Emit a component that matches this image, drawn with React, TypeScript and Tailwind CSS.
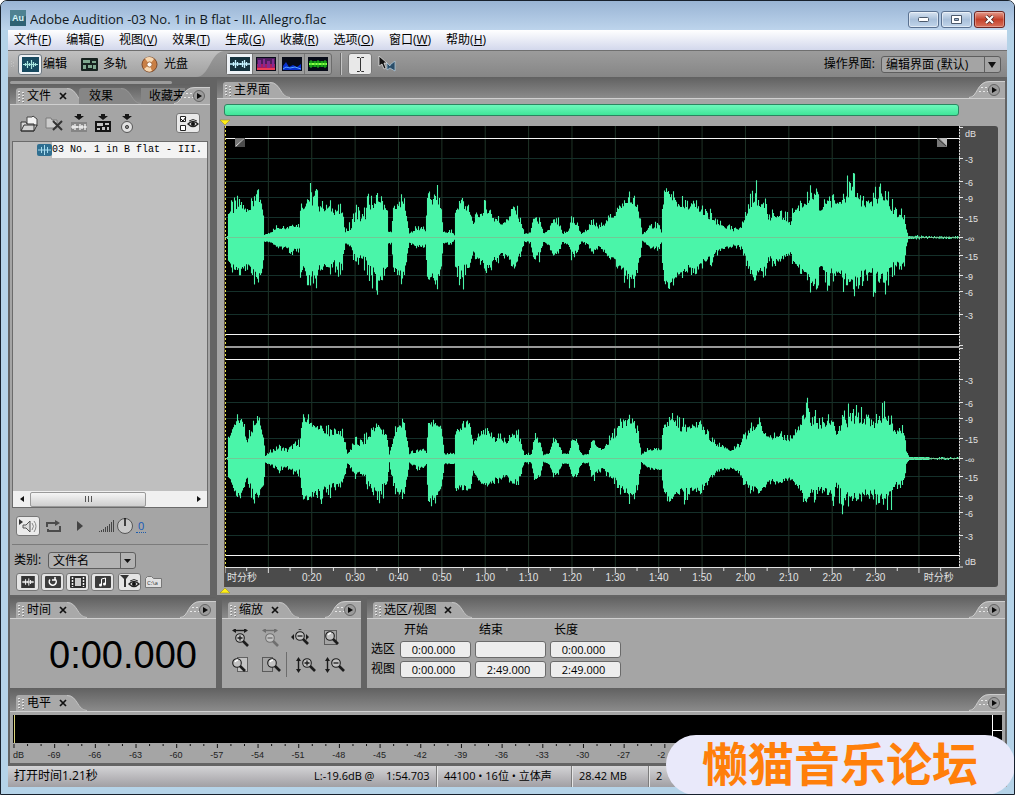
import React from "react";

type Point = [number, number, number, number, number];

// x, body above, body below, peak above, peak below
const LEFT_CHANNEL: Point[] = [
  [0, 1, 1, 1, 1], [2, 1, 1, 1, 1], [3, 24, 24, 36, 32], [8, 27, 30, 40, 37], [14, 31, 32, 51, 43], [22, 27, 28, 34, 38], [27, 33, 33, 42, 47],
  [31, 44, 40, 54, 52], [36, 34, 36, 42, 42], [38, 22, 24, 22, 24], [39, 2, 3, 2, 4], [46, 5, 5, 8, 6], [52, 9, 9, 15, 13],
  [60, 9, 10, 14, 15], [68, 11, 12, 17, 18], [74, 11, 12, 14, 14], [75, 26, 30, 40, 50], [78, 31, 32, 49, 57], [84, 35, 38, 55, 48],
  [91, 36, 38, 58, 54], [94, 30, 32, 40, 40], [102, 28, 28, 38, 35], [110, 25, 26, 33, 36], [116, 25, 26, 32, 39], [120, 5, 5, 12, 12],
  [126, 8, 9, 18, 15], [130, 20, 22, 43, 35], [138, 17, 18, 27, 30], [142, 22, 24, 49, 42], [148, 33, 34, 43, 61],
  [156, 35, 38, 43, 47], [162, 26, 28, 30, 35], [163, 5, 5, 6, 7], [166, 5, 5, 6, 7], [168, 26, 28, 33, 38], [174, 35, 36, 40, 45],
  [179, 33, 34, 44, 46], [182, 14, 15, 18, 18], [184, 4, 5, 5, 6], [192, 7, 8, 13, 11], [198, 9, 8, 16, 12], [200, 5, 5, 6, 7],
  [202, 39, 40, 49, 46], [208, 36, 40, 48, 45], [213, 38, 42, 52, 58], [216, 26, 28, 36, 36], [218, 5, 5, 6, 6], [226, 4, 5, 9, 8],
  [229, 2, 2, 2, 2], [230, 24, 27, 31, 35], [236, 34, 32, 51, 57], [242, 28, 28, 37, 41], [248, 14, 14, 17, 20],
  [254, 21, 22, 33, 28], [260, 25, 28, 39, 40], [264, 24, 28, 43, 43], [268, 18, 22, 27, 28], [276, 13, 16, 22, 24],
  [281, 15, 16, 20, 22], [287, 27, 27, 36, 35], [292, 21, 22, 32, 28], [296, 13, 13, 16, 17], [299, 3, 3, 4, 4], [305, 4, 4, 5, 6],
  [308, 18, 18, 25, 25], [314, 15, 16, 20, 24], [318, 4, 4, 5, 6], [324, 6, 7, 10, 9], [328, 17, 17, 21, 27], [333, 13, 14, 20, 20],
  [337, 3, 4, 5, 5], [342, 5, 6, 8, 7], [346, 14, 14, 30, 25], [352, 11, 12, 16, 18], [356, 3, 3, 4, 4], [362, 7, 6, 10, 8],
  [367, 12, 13, 20, 20], [374, 9, 8, 14, 12], [381, 14, 15, 20, 19], [388, 22, 22, 30, 30], [396, 29, 29, 42, 40],
  [402, 34, 34, 50, 54], [408, 34, 36, 46, 54], [413, 24, 24, 30, 32], [415, 18, 18, 20, 22], [417, 3, 3, 4, 4], [424, 8, 8, 12, 11],
  [432, 10, 10, 26, 18], [436, 5, 5, 7, 7], [438, 34, 36, 50, 42], [444, 41, 44, 51, 56], [448, 38, 42, 56, 61],
  [455, 31, 36, 43, 46], [462, 29, 29, 38, 38], [470, 27, 28, 40, 38], [479, 24, 24, 34, 30], [486, 17, 18, 28, 28],
  [492, 13, 12, 17, 17], [500, 9, 9, 15, 12], [508, 6, 7, 10, 9], [516, 10, 9, 14, 14], [520, 17, 16, 34, 32],
  [525, 34, 35, 49, 51], [531, 34, 36, 60, 46], [540, 34, 34, 50, 50], [543, 18, 20, 25, 25], [552, 20, 22, 28, 34],
  [560, 18, 18, 30, 27], [565, 14, 16, 20, 20], [568, 25, 24, 34, 30], [577, 33, 34, 44, 40], [584, 37, 40, 50, 54],
  [592, 36, 40, 50, 57], [595, 27, 28, 33, 38], [603, 35, 35, 53, 58], [610, 33, 34, 45, 45], [617, 38, 38, 60, 57],
  [626, 42, 42, 66, 56], [634, 37, 38, 52, 58], [640, 33, 34, 44, 45], [648, 37, 36, 48, 60], [656, 34, 36, 58, 46],
  [661, 37, 36, 58, 58], [666, 27, 28, 40, 46], [672, 22, 26, 32, 35], [679, 20, 28, 26, 36], [681, 7, 8, 9, 9], [683, 1, 1, 1, 1],
  [694, 0, 0, 2, 2], [700, 0, 0, 1, 1], [734, 0, 0, 1, 1],
];

const RIGHT_CHANNEL: Point[] = [
  [0, 1, 1, 1, 1], [2, 1, 1, 1, 1], [3, 20, 18, 26, 24], [9, 36, 34, 41, 40], [16, 34, 34, 52, 46], [22, 17, 20, 24, 28], [28, 30, 34, 40, 50],
  [34, 37, 34, 48, 40], [38, 22, 28, 28, 37], [40, 2, 3, 2, 4], [46, 6, 6, 10, 9], [54, 9, 9, 15, 14], [62, 7, 8, 12, 12],
  [68, 11, 12, 17, 16], [74, 12, 12, 20, 18], [77, 38, 38, 46, 42], [84, 36, 40, 49, 46], [90, 31, 32, 37, 50],
  [96, 30, 32, 34, 55], [102, 24, 28, 33, 42], [110, 25, 26, 32, 34], [115, 24, 25, 36, 32], [119, 17, 18, 24, 22], [122, 4, 4, 6, 6],
  [130, 14, 14, 22, 20], [138, 14, 15, 24, 22], [143, 18, 22, 32, 40], [149, 30, 33, 45, 42], [156, 28, 28, 32, 46],
  [161, 24, 26, 30, 34], [164, 3, 3, 4, 4], [167, 15, 18, 20, 28], [172, 32, 34, 39, 40], [180, 30, 30, 37, 38], [184, 4, 4, 5, 5],
  [192, 6, 8, 13, 12], [198, 9, 9, 14, 12], [201, 5, 5, 6, 6], [203, 36, 42, 48, 61], [210, 34, 38, 41, 50], [216, 30, 28, 38, 36],
  [219, 4, 5, 5, 5], [229, 4, 5, 7, 6], [230, 23, 25, 27, 35], [238, 34, 30, 41, 35], [244, 29, 29, 40, 38], [248, 15, 13, 20, 16],
  [255, 22, 23, 29, 26], [262, 25, 26, 33, 31], [270, 18, 21, 26, 28], [274, 20, 20, 34, 28], [280, 14, 16, 20, 20],
  [287, 23, 24, 29, 32], [293, 22, 22, 29, 28], [299, 3, 3, 4, 4], [306, 4, 4, 6, 6], [309, 17, 19, 27, 24], [315, 15, 16, 20, 20],
  [318, 3, 3, 5, 5], [324, 4, 5, 6, 6], [328, 19, 17, 26, 23], [334, 13, 12, 16, 16], [337, 4, 4, 5, 5], [343, 4, 5, 6, 6],
  [347, 19, 18, 27, 24], [353, 11, 12, 14, 14], [357, 3, 4, 4, 5], [363, 4, 4, 5, 5], [367, 16, 16, 21, 24], [376, 7, 8, 10, 12],
  [382, 14, 14, 20, 19], [388, 21, 20, 30, 28], [396, 30, 28, 44, 36], [402, 38, 34, 47, 43], [408, 32, 34, 43, 47],
  [413, 24, 24, 30, 28], [416, 3, 3, 4, 4], [424, 8, 9, 12, 12], [436, 7, 10, 10, 12], [438, 33, 32, 43, 40], [444, 36, 42, 48, 52],
  [447, 41, 40, 57, 55], [454, 27, 30, 43, 38], [460, 29, 32, 44, 50], [468, 33, 32, 42, 38], [477, 31, 30, 37, 35],
  [482, 20, 22, 30, 26], [490, 14, 14, 17, 16], [497, 12, 10, 16, 14], [504, 7, 9, 10, 11], [513, 10, 11, 16, 15],
  [519, 18, 22, 26, 28], [526, 30, 30, 40, 42], [533, 33, 30, 45, 40], [539, 26, 30, 34, 44], [545, 21, 22, 30, 28],
  [553, 18, 22, 25, 28], [560, 20, 22, 30, 28], [567, 19, 21, 30, 25], [575, 34, 32, 42, 39], [582, 37, 36, 65, 51],
  [587, 36, 34, 59, 47], [596, 33, 30, 42, 36], [602, 35, 32, 46, 40], [607, 36, 34, 42, 54], [612, 23, 24, 44, 38],
  [617, 33, 36, 46, 54], [624, 37, 38, 59, 48], [634, 40, 40, 54, 48], [643, 37, 34, 49, 42], [648, 32, 34, 44, 46],
  [653, 37, 38, 56, 56], [659, 40, 38, 64, 57], [666, 30, 32, 44, 53], [672, 26, 24, 37, 36], [679, 26, 22, 34, 27], [681, 7, 5, 9, 5],
  [684, 1, 1, 1, 1], [703, 1, 1, 1, 1], [705, 0, 0, 1, 1], [734, 0, 0, 1, 1],
];

function noise(n: number): number {
  const v = Math.sin(n * 12.9898) * 43758.5453;
  return v - Math.floor(v);
}

function wavePath(points: Point[], center: number, seed: number): string {
  let d = "";
  let seg = 0;
  for (let x = 2; x < 734; x++) {
    while (seg < points.length - 2 && points[seg + 1][0] <= x) seg++;
    const a = points[seg];
    const b = points[seg + 1];
    const t = (x - a[0]) / (b[0] - a[0]);
    const mix = (k: number) => a[k] + (b[k] - a[k]) * t;
    const n1 = noise(x + seed);
    const n2 = noise(x * 1.7 + seed * 3 + 9);
    const up = mix(1) * (0.84 + 0.2 * n2) + (mix(3) - mix(1)) * 1.1 * Math.pow(n1, 2.6);
    const down = mix(2) * (0.84 + 0.2 * n1) + (mix(4) - mix(2)) * 1.1 * Math.pow(n2, 2.6);
    d += `M${x + 0.5} ${(center - up).toFixed(1)}V${(center + down + 1).toFixed(1)}`;
  }
  return d;
}

const WAVES = [wavePath(LEFT_CHANNEL, 111, 4), wavePath(RIGHT_CHANNEL, 332, 77)];
const GRID_Y = [32, 55, 71, 91, 129, 149, 165, 188, 253, 276, 292, 312, 350, 370, 386, 409];
const DB_LABELS: [number, string][] = [
  [7, "dB"], [33, "-3"], [56, "-6"], [72, "-9"], [92, "-15"], [112, "-∞"], [130, "-15"], [150, "-9"], [166, "-6"], [189, "-3"],
  [254, "-3"], [277, "-6"], [293, "-9"], [313, "-15"], [333, "-∞"], [351, "-15"], [371, "-9"], [387, "-6"], [410, "-3"], [435, "dB"],
];
const TIMES = ["0:20", "0:30", "0:40", "0:50", "1:00", "1:10", "1:20", "1:30", "1:40", "1:50", "2:00", "2:10", "2:20", "2:30"];
const STEP = 5.909;

const UI = "font-['Open_Sans','Noto_Sans_CJK_SC',sans-serif]";

function Grip({ className = "" }: { className?: string }) {
  return (
    <svg width="8" height="13" viewBox="0 0 8 13" className={className} aria-hidden="true">
      {[1, 4, 7, 10].map((y) => (
        <g key={y}>
          <path d={`M0 ${y}h2v1h-2zM4 ${y + 1}h2v1h-2z`} fill="#e6e6e6" />
          <path d={`M1 ${y + 1}h1v1h-1zM5 ${y + 2}h1v1h-1z`} fill="#7b7b7b" />
        </g>
      ))}
    </svg>
  );
}

function Tab({ label, active = true, closable = true }: { label: string; active?: boolean; closable?: boolean }) {
  return (
    <div className="flex h-4 shrink-0">
      <div className={`flex items-center rounded-tl-[3px] ${active ? "bg-[#a9a9a9]" : "bg-[#868686]"} pl-0.5`}>
        {active ? <Grip /> : null}
        <button type="button" className={`text-[12px] leading-4 text-black ${active ? "pl-px" : "px-2"}`}>{label}</button>
        {closable ? (
          <button type="button" aria-label={`关闭${label}`} className="ml-2">
            <svg width="8" height="8" viewBox="0 0 8 8"><path d="M1 1l6 6M7 1l-6 6" stroke="#111" strokeWidth="1.7" /></svg>
          </button>
        ) : null}
      </div>
      <svg width="20" height="16" viewBox="0 0 20 16" aria-hidden="true">
        <path d="M0 0C11 0 10 16 20 16H0Z" fill={active ? "#a9a9a9" : "#868686"} />
        <path d="M0 .5C11 .5 10 15.5 20 15.5" fill="none" stroke={active ? "#c4c4c4" : "#959595"} />
      </svg>
    </div>
  );
}

function PanelMenu({ label }: { label: string }) {
  return (
    <button type="button" aria-label={label} className="ml-auto shrink-0">
      <svg width="36" height="17" viewBox="0 0 36 17">
        <path d="M0 17C9 17 7 0 21 0H36V17Z" fill="#a9a9a9" />
        <path d="M0 16.5C9 16.5 7 .5 21 .5H36" fill="none" stroke="#cdcdcd" />
        {[12, 16, 20].map((x) => (
          <path key={x} d={`M${x} 6h2v1h-2zM${x - 2} 10h2v1h-2z`} fill="#e8e8e8" />
        ))}
        <circle cx="25" cy="9" r="5.5" fill="#9b9b9b" stroke="#666" />
        <path d="M23 6l5 3-5 3z" fill="#0a0a0a" />
      </svg>
    </button>
  );
}

function Strip({ children, className }: { children: React.ReactNode; className: string }) {
  return (
    <div className={`flex items-end border-b border-[#cfcfcf] bg-linear-to-b from-[#616161] to-[#8b8b8b] pl-1.5 ${className}`}>{children}</div>
  );
}

function WaveIcon({ className = "", stroke = "#a8e6df", bg = "#17495f" }: { className?: string; stroke?: string; bg?: string }) {
  return (
    <svg width="17" height="15" viewBox="0 0 17 15" className={className} aria-hidden="true">
      <rect width="17" height="15" fill={bg} />
      <path d="M1 7.5h15M3.5 6v3M5.5 4v7M7.5 6v3M9.5 3v9M11.5 5v5M13.5 6v3" stroke={stroke} strokeWidth="1.2" />
    </svg>
  );
}

function SpectrumIcon({ kind }: { kind: "wave" | "freq" | "pan" | "phase" }) {
  return (
    <svg width="20" height="14" viewBox="0 0 20 14" aria-hidden="true">
      <rect width="20" height="14" fill={kind === "wave" ? "#15323d" : "#070b18"} />
      {kind === "wave" && <path d="M0 7h20M3.5 5v4M5.5 3v8M7.5 5v4M10.5 6v2M12.5 4v6M14.5 3v8M16.5 5v4" stroke="#c4f2ff" strokeWidth="1.3" />}
      {kind === "freq" && (
        <>
          <path d="M1 1h18v12H1z" fill="#4b1c5c" />
          <path d="M1 7h18v6H1z" fill="#a81a62" />
          <path d="M2 3h3v7H2zM7 2h2v8H7zM11 4h3v7h-3zM16 2h2v8h-2z" fill="#842a90" />
          <path d="M1 11h18v2H1z" fill="#ed3d57" />
        </>
      )}
      {kind === "pan" && (
        <>
          <path d="M1 9l3-4 3 5 4-2 4 2 4-3v6H1z" fill="#0730cf" />
          <path d="M1 12l3-2 4 1 5-1 6 2" fill="none" stroke="#5aa4ff" />
        </>
      )}
      {kind === "phase" && (
        <>
          <path d="M1 4h18v6H1z" fill="#087b10" />
          <path d="M1 7h18" stroke="#8cff47" strokeWidth="2" />
          <path d="M3 3v8M7 4v6M10 3v8M14 4v6M17 3v8" stroke="#2bc425" />
        </>
      )}
    </svg>
  );
}

function MultiIcon() {
  return (
    <svg width="17" height="13" viewBox="0 0 17 13" aria-hidden="true">
      <rect width="17" height="13" rx="1" fill="#17221f" />
      <path d="M2 2h7v3H2zM11 3h4v2h-4zM2 7h3v4H2zM7 7h4v3H7zM12 7h3v4h-3z" fill="#7fa88f" />
    </svg>
  );
}

function ImportIcon({ kind }: { kind: "wave" | "multi" | "disc" }) {
  return (
    <svg width="18" height="19" viewBox="0 0 18 19" aria-hidden="true">
      <path d="M7 0h4v2h3L9 6 4 2h3z" fill="#171717" />
      {kind === "wave" && (
        <>
          <path d="M1 8h16v10H1z" fill="#858585" />
          <path d="M1 13h16M3 11v4M5 10v6M7 12v2M10 10v6M12 11v4M15 10v6" stroke="#fff" strokeWidth="1.2" />
        </>
      )}
      {kind === "multi" && (
        <>
          <path d="M1 7h16v11H1z" fill="#151515" />
          <path d="M3 9h6v3H3zM11 9h4v2h-4zM3 14h3v2H3zM8 13h3v3H8zM13 13h2v3h-2z" fill="#c4c4c4" />
        </>
      )}
      {kind === "disc" && (
        <>
          <circle cx="9" cy="13" r="5.5" fill="#e1e1e1" stroke="#555" />
          <circle cx="9" cy="13" r="1.6" fill="#888" stroke="#444" />
        </>
      )}
    </svg>
  );
}

function Eye({ x, y }: { x: number; y: number }) {
  return (
    <g transform={`translate(${x} ${y})`}>
      <path d="M0 4Q5-1 10 4Q5 9 0 4Z" fill="#ddd" stroke="#222" strokeWidth="1.4" />
      <circle cx="5" cy="4" r="2" fill="#111" />
      <path d="M1 1Q5-2 9 1" fill="none" stroke="#333" />
    </g>
  );
}

type ZoomKind = "hin" | "hout" | "full" | "sel" | "left" | "right" | "vin" | "vout";

function ZoomIcon({ kind }: { kind: ZoomKind }) {
  const gray = kind === "hout" ? "#6f6f6f" : "#1c1c1c";
  const horizontal = kind === "hin" || kind === "hout";
  const vertical = kind === "vin" || kind === "vout";
  const box = kind === "sel" || kind === "left" || kind === "right";
  const cx = kind === "left" ? 6 : vertical ? 11 : kind === "right" ? 11 : 9;
  const cy = horizontal ? 9 : 7;
  return (
    <svg width="20" height="18" viewBox="0 0 20 18" aria-hidden="true">
      {horizontal && <path d="M3 1.5h12" stroke={gray} strokeWidth="1.4" />}
      {horizontal && <path d="M5 -1L1 1.5 5 4zM13 -1L17 1.5 13 4z" fill={gray} />}
      {vertical && <path d="M2.500 3v12" stroke={gray} strokeWidth="1.4" />}
      {vertical && <path d="M0 5l2.500-4L5 5zM0 13l2.500 4L5 13z" fill={gray} />}
      {box && (
        <rect x={kind === "left" ? 6.5 : kind === "right" ? 1.5 : 3.5} y="1.5" width={kind === "sel" ? 12 : 10} height="14" fill={kind === "left" ? "#c4c4c4" : "none"} stroke="#111" strokeDasharray="1 1" />
      )}
      {kind === "full" && <path d="M0 8l3-3v6zM18 8l-3-3v6zM7 1l2-1 2 1z" fill={gray} />}
      <path d={`M${cx + 3} ${cy + 3}l5 5`} stroke={gray} strokeWidth="2.6" />
      <circle cx={cx} cy={cy} r="4.300" fill="#c2c2c2" stroke={gray} strokeWidth="1.1" />
      {!box && <path d={kind === "hin" || kind === "vin" ? `M${cx - 2.5} ${cy}h5M${cx} ${cy - 2.5}v5` : `M${cx - 2.5} ${cy}h5`} stroke={gray} strokeWidth="1.3" />}
      {box && <path d={`M${cx - 2} ${cy - 1}q1-2 3-2`} fill="none" stroke="#fff" strokeWidth="1.3" />}
    </svg>
  );
}

const ZOOMS: [ZoomKind, string][] = [
  ["hin", "水平放大"], ["hout", "水平缩小"], ["full", "全部缩小"], ["sel", "缩放至选区"],
  ["left", "放大选区左侧"], ["right", "放大选区右侧"], ["vin", "垂直放大"], ["vout", "垂直缩小"],
];

const MENUS = [["文件", "F"], ["编辑", "E"], ["视图", "V"], ["效果", "T"], ["生成", "G"], ["收藏", "R"], ["选项", "O"], ["窗口", "W"], ["帮助", "H"]];

function TitleBar() {
  return (
    <header className="flex h-[29px] shrink-0 items-center bg-linear-to-b from-[#99b4d4] to-[#bdd4ec] pl-[9px] pr-[9px]">
      <svg width="16" height="16" viewBox="0 0 16 16" className="mt-1" aria-hidden="true">
        <rect width="16" height="16" fill="#2f6273" />
        <path d="M0 0h16v6L0 11z" fill="#4e8291" />
        <text x="2" y="11" fontSize="9" fontWeight="700" fill="#d9f5f8" fontFamily="Liberation Sans, sans-serif">Au</text>
      </svg>
      <h1 className="ml-1 mt-1.5 grow truncate text-[13px] leading-4 text-[#101820]">Adobe Audition -03 No. 1 in B flat - III. Allegro.flac</h1>
      <div className="mt-2 flex gap-0.5">
        <button type="button" aria-label="最小化" className="grid h-[17px] w-[31px] place-items-center rounded-[3px] border border-[#5a7190] bg-linear-to-b from-[#d8e4f1] via-[#a9c0da] to-[#c1d5ea] inset-ring inset-ring-white/50">
          <svg width="11" height="5" viewBox="0 0 11 5"><rect x=".5" y=".5" width="10" height="4" rx="1" fill="#fff" stroke="#4c5a6c" /></svg>
        </button>
        <button type="button" aria-label="最大化" className="grid h-[17px] w-[31px] place-items-center rounded-[3px] border border-[#5a7190] bg-linear-to-b from-[#d8e4f1] via-[#a9c0da] to-[#c1d5ea] inset-ring inset-ring-white/50">
          <svg width="11" height="9" viewBox="0 0 11 9"><path d="M.5.500h10v8H.5z" fill="#fff" stroke="#4c5a6c" /><path d="M3.500 3.500h4v2h-4z" fill="#9bb3cf" stroke="#4c5a6c" /></svg>
        </button>
        <button type="button" aria-label="关闭" className="grid h-[17px] w-[31px] place-items-center rounded-[3px] border border-[#6d2421] bg-linear-to-b from-[#e39a8c] via-[#c4402a] to-[#d8705a] inset-ring inset-ring-white/30">
          <svg width="11" height="9" viewBox="0 0 11 9"><path d="M2 1l7 7M9 1L2 8" stroke="#47221f" strokeWidth="3.600" /><path d="M2 1l7 7M9 1L2 8" stroke="#fff" strokeWidth="2.200" /></svg>
        </button>
      </div>
    </header>
  );
}

function Toolbar() {
  return (
    <div className="flex h-[27px] shrink-0 items-stretch border-t border-[#6f6f6f] bg-linear-to-b from-[#9c9c9c] to-[#868686] text-[12px]">
      <div className="flex items-center bg-linear-to-b from-[#c0c0c0] to-[#a0a0a0] pl-[3px]">
        <Grip className="w-1" />
        <button type="button" className="ml-[3px] flex items-center">
          <span className="grid h-[21px] w-6 place-items-center rounded-[3px] border border-[#6d7880] bg-[#eef2f6]"><WaveIcon /></span>
          <span className="pl-px">编辑</span>
        </button>
        <button type="button" className="ml-[14px] flex items-center gap-[5px]"><MultiIcon />多轨</button>
        <button type="button" className="ml-[14px] flex items-center gap-[6px]">
          <svg width="17" height="17" viewBox="0 0 17 17" aria-hidden="true">
            <circle cx="8.500" cy="8.500" r="7.500" fill="#c97f45" stroke="#7c4a2b" />
            <path d="M8.500 8.500L4 2.500A7 7 0 0 1 13 3zM8.500 8.500L3 13a7 7 0 0 0 8 2z" fill="#f7d7b0" />
            <circle cx="8.500" cy="8.500" r="2.600" fill="#fff" stroke="#a76c3e" />
          </svg>
          光盘
        </button>
        <span className="w-2" />
      </div>
      <svg width="30" height="26" viewBox="0 0 30 26" aria-hidden="true">
        <defs><linearGradient id="toolbarCurve" x2="0" y2="1"><stop stopColor="#c0c0c0" /><stop offset="1" stopColor="#a0a0a0" /></linearGradient></defs>
        <path d="M0 0H28C14 1 14 26 0 26Z" fill="url(#toolbarCurve)" />
      </svg>
      <div className="my-0.5 flex rounded-[3px] border border-[#6c6c6c] bg-[#9d9d9d]">
        {(["wave", "freq", "pan", "phase"] as const).map((kind, i) => (
          <button key={kind} type="button" aria-label={["波形视图", "频谱视图", "声像视图", "相位视图"][i]} className={`grid w-[26px] place-items-center border-r border-[#777] last:border-r-0 ${i === 0 ? "bg-[#eef2f6]" : ""}`}>
            <SpectrumIcon kind={kind} />
          </button>
        ))}
      </div>
      <span className="my-0.5 ml-2 w-0.5 border-l border-[#6a6a6a] bg-[#c4c4c4]" />
      <button type="button" aria-label="时间选择工具" className="my-0.5 ml-1.5 grid w-6 place-items-center rounded-[3px] border border-[#777] bg-[#e8e8e8]">
        <svg width="9" height="15" viewBox="0 0 9 15"><path d="M1 .5h2.500l1 1 1-1H8M4.500 1v13M1 14.500h2.500l1-1 1 1H8" fill="none" stroke="#333" /></svg>
      </button>
      <button type="button" aria-label="移动工具" className="ml-[6px]">
        <svg width="18" height="18" viewBox="0 0 18 18">
          <path d="M1 1v10l3-2 2 5 2-1-2-5h3z" fill="#111" stroke="#eee" strokeWidth=".7" />
          <path d="M9 8l3 3v-1l5-4v10l-5-3-3 2z" fill="#2a4d68" stroke="#b5d0e2" strokeWidth=".7" />
        </svg>
      </button>
      <label htmlFor="workspace" className="ml-auto self-center pr-1.5">操作界面:</label>
      <div className="relative mr-1.5 grid self-center">
        <select id="workspace" className="h-[17px] w-[120px] appearance-none rounded-[3px] border border-[#5e5e5e] bg-[#a4a4a4] pl-1 text-[12px] leading-[15px] text-black">
          <option>编辑界面 (默认)</option>
        </select>
        <svg width="16" height="15" viewBox="0 0 16 15" className="pointer-events-none absolute right-px top-px" aria-hidden="true"><path d="M.5 0v15" stroke="#5e5e5e" /><path d="M4 5h8l-4 6z" fill="#111" /></svg>
      </div>
    </div>
  );
}

function FilesPanel() {
  const square = "grid h-[18px] w-[23px] place-items-center rounded-[3px] border border-[#777] bg-[#e4e4e4]";
  return (
    <section className="flex w-[200px] shrink-0 flex-col">
      <div className="mt-1 h-[3px] w-[162px] rounded-full bg-[#9c9c9c]" />
      <Strip className="h-[21px]">
        <Tab label="文件" />
        <div className="-ml-2"><Tab label="效果" active={false} closable={false} /></div>
        <button type="button" className="-mr-4 h-4 shrink-0 whitespace-nowrap bg-[#868686] pl-2 text-[12px] leading-4 text-black">收藏夹</button>
        <PanelMenu label="文件面板菜单" />
      </Strip>
      <div className="flex grow flex-col bg-[#a5a5a5] px-0.5">
        <div className="flex h-9 items-center gap-1.5 pl-2">
          <button type="button" aria-label="打开文件">
            <svg width="19" height="17" viewBox="0 0 19 17"><path d="M7 6V2h5l1-1 4 3v7H7z" fill="#f2f2f2" stroke="#444" /><path d="M1 16V7h5l1 2h7v7zM1 16l3-6h13l-3 6z" fill="#d4d4d4" stroke="#333" /></svg>
          </button>
          <button type="button" aria-label="关闭文件">
            <svg width="19" height="17" viewBox="0 0 19 17"><path d="M1 13V3h5l1 2h5v8z" fill="#ccc" stroke="#7b7b7b" /><path d="M8 6l9 9M17 6l-9 9" stroke="#333" strokeWidth="2" /></svg>
          </button>
          <button type="button" aria-label="插入波形"><ImportIcon kind="wave" /></button>
          <button type="button" aria-label="插入多轨"><ImportIcon kind="multi" /></button>
          <button type="button" aria-label="插入光盘"><ImportIcon kind="disc" /></button>
          <button type="button" aria-label="高级选项" className="ml-auto mr-2 grid h-5 w-6 place-items-center rounded-[3px] border border-[#777] bg-[#e9e9e9]">
            <svg width="21" height="17" viewBox="0 0 21 17"><path d="M2.500 1.500h5v5h-5zM2.500 10.500h5v5h-5z" fill="#fff" stroke="#222" /><path d="M3 4l2 2 3-4" fill="none" stroke="#111" /><Eye x={10} y={5} /></svg>
          </button>
        </div>
        <ul className="min-h-[350px] grow border border-b-0 border-[#6b6b6b] bg-[#bfbfbf]">
          <li className="flex h-4 items-center pl-6">
            <svg width="15" height="12" viewBox="0 0 15 12" className="shrink-0" aria-hidden="true"><rect width="15" height="12" rx="2" fill="#2f6f91" /><path d="M1 6h13M4.500 3v6M7.500 1v10M10.500 3v6" stroke="#a7dcef" /></svg>
            <span className="grow overflow-hidden whitespace-pre bg-[#f3f3f3] font-['Liberation_Mono',monospace] text-[10px] leading-4 text-black">03 No. 1 in B flat - III.</span>
          </li>
        </ul>
        <div className="flex h-[17px] shrink-0 items-center border border-t-0 border-[#6b6b6b] bg-[#f0f0f0]">
          <button type="button" aria-label="向左滚动" className="grid w-[17px] place-items-center"><svg width="4" height="6" viewBox="0 0 4 6"><path d="M4 0v6L0 3z" fill="#111" /></svg></button>
          <span className="grid h-[15px] w-[116px] place-items-center rounded-[2px] border border-[#999] bg-linear-to-b from-[#f5f5f5] to-[#cfcfcf]"><svg width="8" height="6" viewBox="0 0 8 6"><path d="M1.500 0v6M4.500 0v6M7.500 0v6" stroke="#555" /></svg></span>
          <button type="button" aria-label="向右滚动" className="ml-auto grid w-[17px] place-items-center"><svg width="4" height="6" viewBox="0 0 4 6"><path d="M0 0v6l4-3z" fill="#111" /></svg></button>
        </div>
        <div className="flex h-[37px] shrink-0 items-center border-b border-[#7b7b7b] pl-1">
          <button type="button" aria-label="自动播放" className="grid h-5 w-6 place-items-center rounded-[3px] border border-[#777] bg-[#ebebeb]">
            <svg width="20" height="15" viewBox="0 0 20 15"><path d="M1 0v6l4-3z" fill="#333" /><path d="M5 6h3l4-4v11l-4-4H5z" fill="#ddd" stroke="#555" /><path d="M14 4q3 3 0 7M16 2q4 5 0 11" fill="none" stroke="#888" /></svg>
          </button>
          <button type="button" aria-label="循环" className="ml-1.5"><svg width="15" height="13" viewBox="0 0 15 13"><path d="M1 7V3h9M14 6v5H2V9" fill="none" stroke="#4b4b4b" strokeWidth="2" /><path d="M9 0l5 3-5 3z" fill="#4b4b4b" /></svg></button>
          <button type="button" aria-label="播放" className="ml-4"><svg width="6" height="10" viewBox="0 0 6 10"><path d="M0 0v10l6-5z" fill="#444" /></svg></button>
          <svg width="15" height="14" viewBox="0 0 15 14" className="ml-4" aria-hidden="true"><path d="M.5 12v1M2.500 11v2M4.500 10v3M6.500 8v5M8.500 7v6M10.500 5v8M12.500 3v10M14.500 1v12" stroke="#444" /></svg>
          <button type="button" aria-label="音量" className="ml-0.5"><svg width="18" height="18" viewBox="0 0 18 18"><circle cx="9" cy="9" r="7.500" fill="#c9c9c9" stroke="#555" /><path d="M9 1v8" stroke="#111" strokeWidth="1.500" /></svg></button>
          <a href="#volume" className="ml-0.5 border-b border-dotted border-[#1c5cad] px-0.5 text-[11px] leading-3 text-[#1659b8]">0</a>
        </div>
        <div className="flex h-6 shrink-0 items-end text-[12px]">
          <label htmlFor="category" className="w-9 pl-0.5 leading-[18px]">类别:</label>
          <div className="relative grid">
            <select id="category" className="h-[17px] w-[88px] appearance-none rounded-[3px] border border-[#5e5e5e] bg-[#b2b2b2] pl-1 text-[12px] leading-[15px] text-black"><option>文件名</option></select>
            <svg width="15" height="15" viewBox="0 0 15 15" className="pointer-events-none absolute right-px top-px" aria-hidden="true"><path d="M.5 0v15" stroke="#5e5e5e" /><path d="M4 6h7l-3.500 4z" fill="#111" /></svg>
          </div>
        </div>
        <div className="flex h-[26px] shrink-0 items-center gap-0.5 pl-1">
          <button type="button" aria-label="显示音频" className={square}><WaveIcon className="h-3 w-4" stroke="#fff" bg="#333" /></button>
          <button type="button" aria-label="显示循环" className={square}><svg width="16" height="12" viewBox="0 0 16 12"><rect width="16" height="12" rx="1" fill="#3c3c3c" /><path d="M5 3.500A3.500 3.500 0 1 0 10 3M10 1v3H7" fill="none" stroke="#fff" strokeWidth="1.500" /></svg></button>
          <button type="button" aria-label="显示视频" className={square}><svg width="16" height="12" viewBox="0 0 16 12"><rect width="16" height="12" rx="1" fill="#2e2e2e" /><path d="M5 2h6v8H5z" fill="#ccc" /><path d="M2.500 1v10M13.500 1v10" stroke="#eee" strokeWidth="1.500" strokeDasharray="2 1" /></svg></button>
          <button type="button" aria-label="显示MIDI" className={square}><svg width="16" height="12" viewBox="0 0 16 12"><rect width="16" height="12" rx="1" fill="#3c3c3c" /><path d="M6.500 9V3l4-1v6" fill="none" stroke="#fff" /><circle cx="5.500" cy="9" r="1.500" fill="#fff" /><circle cx="9.500" cy="8" r="1.500" fill="#fff" /></svg></button>
          <button type="button" aria-label="筛选" className={`${square} ml-0.5`}><svg width="20" height="14" viewBox="0 0 20 14"><path d="M0 0h9L6 4v8H4V4z" fill="#333" /><Eye x={9} y={5} /></svg></button>
          <button type="button" aria-label="完整路径" className="ml-0.5"><svg width="17" height="12" viewBox="0 0 17 12"><path d="M.5 11.500v-9l2-2h4l2 2h8v9z" fill="#e1e1e1" stroke="#777" /><text x="2" y="9" fontSize="6" fill="#333">C:\a</text></svg></button>
        </div>
      </div>
    </section>
  );
}

function Waveform() {
  return (
    <svg className="h-[442px] min-w-0 grow" role="img" aria-label="立体声波形">
      {Array.from({ length: 16 }, (_, i) => (
        <line key={i} x1={`${(i + 1) * STEP}%`} x2={`${(i + 1) * STEP}%`} y1="0" y2="442" stroke="#1f3327" />
      ))}
      {GRID_Y.map((y) => <line key={y} x1="0" x2="100%" y1={y + 0.5} y2={y + 0.5} stroke="#15302a" />)}
      <svg width="100%" height="442" viewBox="0 0 734 442" preserveAspectRatio="none">
        {WAVES.map((d, i) => <path key={i} d={d} stroke="#4af5a9" strokeWidth="1.100" />)}
      </svg>
      {[111, 332].map((y) => <line key={y} x1="0" x2="100%" y1={y + 0.5} y2={y + 0.5} stroke="#71c995" />)}
      {[12, 208, 233, 429].map((y) => <rect key={y} width="100%" height="1" y={y} fill="#f4f4f4" />)}
      <rect width="100%" height="2" y="220" fill="#999" />
      <path d="M.5 0V442" stroke="#e3e04b" strokeDasharray="2 2" />
      <rect width="100%" height="1" y="441" fill="#e0e0e0" />
      <g><rect x="10" y="12" width="10" height="9" fill="#777" /><path d="M11 20l8-7" stroke="#ddd" /><path d="M20 12v9H11z" fill="#4c4c4c" /></g>
      <svg x="97%" y="12" width="10" height="9" overflow="visible"><rect width="10" height="9" fill="#777" /><path d="M1 1l8 7" stroke="#333" /><path d="M2 0h8v8z" fill="#bbb" /></svg>
    </svg>
  );
}

function MainPanel() {
  return (
    <section className="flex min-w-0 grow flex-col">
      <Strip className="h-[22px]">
        <Tab label="主界面" closable={false} />
        <PanelMenu label="主界面菜单" />
      </Strip>
      <div className="grow bg-[#a5a5a5] px-[7px] pb-2 pt-[5px]">
        <div className="mr-[39px] h-3 rounded-[3px] border border-[#2c8560] bg-linear-to-b from-[#6cf9bc] to-[#3fe699]" />
        <svg width="10" height="10" viewBox="0 0 10 10" className="-ml-1" aria-hidden="true"><path d="M0 4h10L5 9z" fill="#ffee16" stroke="#9a9021" strokeWidth=".6" /></svg>
        <div className="rounded-r-[3px] border-l border-[#5c4f45] bg-[#4b4b4b]">
          <div className="flex">
            <div className="flex min-w-0 grow bg-black"><Waveform /></div>
            <svg width="39" height="442" viewBox="0 0 39 442" className="shrink-0" fontFamily="Liberation Sans, sans-serif" fontSize="9" fill="#e2e2e2">
              <path d="M.5 0V442" stroke="#d9d9d9" strokeDasharray="2 1" />
              {DB_LABELS.map(([y, label], i) => (
                <g key={i}><path d={`M0 ${label === "dB" ? (y < 20 ? 1.5 : 441) : y - 0.5}h4`} stroke="#e2e2e2" /><text x="6" y={y + 4}>{label}</text></g>
              ))}
              <path d="M0 219.500h4M0 222.500h4" stroke="#e2e2e2" />
            </svg>
          </div>
          <div className="pr-[39px]">
            <svg className="block h-[19px] w-full" fontFamily="Liberation Sans, Noto Sans CJK SC, sans-serif" fontSize="10" fill="#e2e2e2">
              {Array.from({ length: 34 }, (_, i) => (
                <line key={i} x1={`${(i * STEP) / 2}%`} x2={`${(i * STEP) / 2}%`} y1="0" y2={i % 2 ? 3 : 5} stroke="#ddd" />
              ))}
              <text x="2" y="13">时分秒</text>
              {TIMES.map((t, i) => <text key={t} x={`${(i + 2) * STEP}%`} y="13" textAnchor="middle">{t}</text>)}
              <text x="95.200%" y="13">时分秒</text>
            </svg>
          </div>
        </div>
        <svg width="10" height="7" viewBox="0 0 10 7" className="-mb-2 -ml-1" aria-hidden="true"><path d="M0 6h10L5 1z" fill="#ffee16" stroke="#9a9021" strokeWidth=".6" /></svg>
      </div>
    </section>
  );
}

function TimeField({ label, value }: { label: string; value: string }) {
  return (
    <td className="p-0 pr-1">
      <input aria-label={label} defaultValue={value} className="block h-[17px] w-[71px] rounded-[3px] border border-[#6a6a6a] bg-[#ededed] pr-1 text-center text-[11px] leading-[15px] text-black" />
    </td>
  );
}

function BottomPanels() {
  return (
    <div className="mt-0.5 flex shrink-0 gap-1.5">
      <section className="flex w-[206px] shrink-0 flex-col">
        <Strip className="h-[22px]"><Tab label="时间" /><PanelMenu label="时间面板菜单" /></Strip>
        <div className="grid h-[69px] place-items-center bg-[#a5a5a5] pl-5 pt-0.5 font-['Liberation_Sans',sans-serif] text-[38px] leading-none text-black">0:00.000</div>
      </section>
      <section className="flex w-[139px] shrink-0 flex-col">
        <Strip className="h-[22px]"><Tab label="缩放" /><PanelMenu label="缩放面板菜单" /></Strip>
        <div className="grid h-[69px] grid-cols-[repeat(4,30px)] content-start gap-y-0.5 bg-[#a5a5a5] px-1 pt-1.5">
          {ZOOMS.map(([kind, label]) => (
            <button key={kind} type="button" aria-label={label} className={`grid h-[25px] place-items-center ${kind === "vin" ? "border-l border-[#6d6d6d] pl-2" : kind === "vout" ? "pl-2" : ""}`}><ZoomIcon kind={kind} /></button>
          ))}
        </div>
      </section>
      <section className="flex min-w-0 grow flex-col">
        <Strip className="h-[22px]"><Tab label="选区/视图" /><PanelMenu label="选区面板菜单" /></Strip>
        <div className="h-[69px] bg-[#a5a5a5] pl-1 pt-0.5">
          <table className="border-separate border-spacing-0 text-[12px]">
            <thead>
              <tr className="h-[18px] text-left leading-[18px]"><td className="w-[29px] p-0" /><th className="p-0 pl-1 font-normal">开始</th><th className="p-0 pl-1 font-normal">结束</th><th className="p-0 pl-1 font-normal">长度</th></tr>
            </thead>
            <tbody>
              <tr className="h-5"><th className="p-0 text-left font-normal">选区</th><TimeField label="选区开始" value="0:00.000" /><TimeField label="选区结束" value="" /><TimeField label="选区长度" value="0:00.000" /></tr>
              <tr className="h-5"><th className="p-0 text-left font-normal">视图</th><TimeField label="视图开始" value="0:00.000" /><TimeField label="视图结束" value="2:49.000" /><TimeField label="视图长度" value="2:49.000" /></tr>
            </tbody>
          </table>
        </div>
      </section>
    </div>
  );
}

function Levels() {
  const labels = Array.from({ length: 15 }, (_, i) => String(-69 + i * 3));
  return (
    <section className="shrink-0">
      <Strip className="h-6"><Tab label="电平" /><PanelMenu label="电平面板菜单" /></Strip>
      <div className="bg-[#a5a5a5] px-[3px] pt-[3px]">
        <div className="flex h-7 justify-between bg-black">
          <span className="ml-px w-px bg-[#d9d27a]" />
          <span className="flex w-2.5 flex-col border-l border-white"><span className="h-4 border-b border-white" /></span>
        </div>
        <svg className="block h-5 w-full" fontFamily="Liberation Sans, Noto Sans CJK SC, sans-serif" fontSize="9" fill="#222">
          {Array.from({ length: 72 }, (_, i) => (
            <line key={i} x1={`${0.1 + i * 1.371}%`} x2={`${0.1 + i * 1.371}%`} y1="1" y2={i % 3 ? 3 : 5} stroke="#111" />
          ))}
          <text x="0" y="15">dB</text>
          {labels.map((t, i) => <text key={t} x={`${4.15 + i * 4.113}%`} y="15" textAnchor="middle">{t}</text>)}
          <text x={`${4.15 + 15 * 4.113}%`} y="15" dx="-7">-2</text>
        </svg>
      </div>
    </section>
  );
}

function StatusBar() {
  const cell = "border-l border-[#e6e6e6] pl-1.5 shadow-[-1px_0_0_#7c7c7c]";
  return (
    <footer className="mt-[3px] flex h-[21px] shrink-0 items-stretch overflow-hidden whitespace-nowrap bg-linear-to-b from-[#d4d4d6] to-[#a19fa4] pl-1.5 text-[11px] leading-5 text-black">
      <span className="w-[300px] text-[12px]">打开时间1.21秒</span>
      <span className="w-[72px]">L:-19.6dB @</span>
      <span className="w-[51px]">1:54.703</span>
      <span className={`w-[135px] ${cell}`}>44100 • 16位 • 立体声</span>
      <span className={`w-[77px] ${cell}`}>28.42 MB</span>
      <span className={cell}>2</span>
    </footer>
  );
}

export default function App() {
  return (
    <div className={`relative flex min-h-screen flex-col overflow-hidden rounded-t-[7px] border border-[#17202c] bg-[#b5d3e8] ${UI}`}>
      <TitleBar />
      <div className="mx-[7px] mb-[7px] flex grow flex-col bg-[#646464]">
        <nav className="flex h-5 shrink-0 items-center gap-[15px] bg-linear-to-b from-white to-[#d3d8ec] pl-1.5 text-[12px] leading-5 text-black">
          {MENUS.map(([name, key]) => (
            <button key={key} type="button" className="whitespace-nowrap">{name}(<u>{key}</u>)</button>
          ))}
        </nav>
        <Toolbar />
        <div className="flex grow flex-col px-0.5">
          <main className="flex grow gap-[7px]">
            <FilesPanel />
            <MainPanel />
          </main>
          <BottomPanels />
          <Levels />
        </div>
        <StatusBar />
      </div>
      <aside className="absolute -bottom-px -right-px flex h-[60px] w-[349px] items-center rounded-[30px] bg-[#e9e9fa] pb-2 pl-9 font-['Noto_Sans_CJK_SC',sans-serif] text-[46px] font-bold leading-none text-[#ff7f0a]">懒猫音乐论坛</aside>
    </div>
  );
}
